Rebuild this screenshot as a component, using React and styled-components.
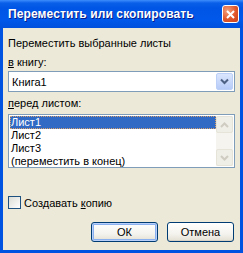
import React from "react";
import styled, { createGlobalStyle } from "styled-components";

const Global = createGlobalStyle`
  html, body { margin: 0; padding: 0; background: #fff; }
  body { font-family: Tahoma, "DejaVu Sans", "Liberation Sans", sans-serif; }
`;

const Window = styled.div`
  width: 243px;
  height: 253px;
  box-sizing: border-box;
  background: #0053e1;
  display: flex;
  flex-direction: column;
  padding: 0 3px 3px 3px;
  overflow: hidden;
`;

const TitleBar = styled.div`
  height: 28px;
  flex: none;
  margin: 0 -3px;
  padding: 0 4px 0 8px;
  display: flex;
  align-items: center;
  justify-content: space-between;
  background: linear-gradient(#3d8dfb 0px, #0a5fe8 3px, #0055e5 8px, #0058ea 20px, #0050dc 28px);
`;

const Title = styled.span`
  color: #fff;
  font-family: "Liberation Sans", sans-serif;
  font-weight: bold;
  font-size: 12px;
  letter-spacing: 0.1px;
  text-shadow: 1px 1px 0 #0a1e8a;
  white-space: nowrap;
`;

const CloseButton = styled.div`
  width: 17px;
  height: 18px;
  box-sizing: border-box;
  border: 1px solid #fff;
  border-radius: 3px;
  background: radial-gradient(circle at 30% 30%, #f2a07e, #e0572c 55%, #c8401a);
  display: flex;
  align-items: center;
  justify-content: center;
`;

const Body = styled.div`
  flex: 1;
  background: #ece9d8;
  padding: 9px 5px 0 5px;
  display: flex;
  flex-direction: column;
  font-family: "Liberation Sans", sans-serif;
  font-size: 11px;
  color: #000;
`;

const Label = styled.div`
  line-height: 13px;
  height: 13px;
  margin-top: ${(p) => p.$mt || 0}px;
  white-space: nowrap;
`;

const U = styled.span`
  text-decoration: underline;
`;

const Combo = styled.div`
  margin-top: 2px;
  height: 21px;
  box-sizing: border-box;
  border: 1px solid #7f9db9;
  background: #fff;
  display: flex;
  align-items: center;
  justify-content: space-between;
  padding: 0 1px 0 3px;
`;

const DropButton = styled.div`
  width: 17px;
  height: 17px;
  box-sizing: border-box;
  border: 1px solid #bcd0f7;
  border-radius: 2px;
  background: linear-gradient(#dbe6fd, #b6cbf8);
  display: flex;
  align-items: center;
  justify-content: center;
`;

const ListBox = styled.div`
  margin-top: 4px;
  height: 54px;
  box-sizing: border-box;
  border: 1px solid #7f9db9;
  background: #fff;
  display: flex;
  padding: 1px;
`;

const Items = styled.div`
  flex: 1;
  display: flex;
  flex-direction: column;
`;

const Item = styled.div`
  height: 13px;
  line-height: 13px;
  padding-left: 1px;
  white-space: nowrap;
  background: ${(p) => (p.$selected ? "#316ac5" : "transparent")};
  color: ${(p) => (p.$selected ? "#fff" : "#000")};
  outline: ${(p) => (p.$selected ? "1px dotted #d8a06a" : "none")};
  outline-offset: -1px;
`;

const ScrollBar = styled.div`
  width: 17px;
  display: flex;
  flex-direction: column;
  justify-content: space-between;
  background: #f5f4ee;
`;

const ScrollBtn = styled.div`
  height: 17px;
  box-sizing: border-box;
  border: 1px solid #e6e4d9;
  border-radius: 2px;
  background: #efeee7;
  display: flex;
  align-items: center;
  justify-content: center;
`;

const CheckRow = styled.div`
  margin-top: 28px;
  display: flex;
  align-items: center;
  gap: 3px;
  height: 13px;
`;

const CheckBox = styled.div`
  width: 13px;
  height: 13px;
  box-sizing: border-box;
  border: 1px solid #1c5180;
  background: linear-gradient(135deg, #dcdcd6, #fff);
`;

const ButtonRow = styled.div`
  margin-top: 13px;
  display: flex;
  justify-content: flex-end;
  gap: 9px;
  padding-right: 1px;
`;

const Button = styled.div`
  width: 67px;
  height: 20px;
  box-sizing: border-box;
  border: 1px solid #003c74;
  border-radius: 3px;
  background: linear-gradient(#fff, #f4f3ee 60%, #e3e0d3);
  box-shadow: ${(p) =>
    p.$default ? "inset 0 0 0 1px #b9d1fa, inset 0 0 0 2px #8bb0ef" : "inset 0 -1px 0 #d6d0c5"};
  display: flex;
  align-items: center;
  justify-content: center;
  font-size: 11px;
`;

export default function App() {
  return (
    <>
      <Global />
      <Window>
        <TitleBar>
          <Title>Переместить или скопировать</Title>
          <CloseButton>
            <svg width="9" height="9" viewBox="0 0 9 9">
              <path d="M1 1L8 8M8 1L1 8" stroke="#fff" strokeWidth="2" />
            </svg>
          </CloseButton>
        </TitleBar>
        <Body>
          <Label>Переместить выбранные листы</Label>
          <Label $mt={6}>
            <U>в</U> книгу:
          </Label>
          <Combo>
            <span>Книга1</span>
            <DropButton>
              <svg width="9" height="7" viewBox="0 0 9 7">
                <path d="M1 1.5L4.5 5L8 1.5" fill="none" stroke="#4d6185" strokeWidth="2" />
              </svg>
            </DropButton>
          </Combo>
          <Label $mt={5}>
            <U>п</U>еред листом:
          </Label>
          <ListBox>
            <Items>
              <Item $selected>Лист1</Item>
              <Item>Лист2</Item>
              <Item>Лист3</Item>
              <Item>(переместить в конец)</Item>
            </Items>
            <ScrollBar>
              <ScrollBtn>
                <svg width="9" height="6" viewBox="0 0 9 6">
                  <path d="M1 5L4.5 1.5L8 5" fill="none" stroke="#cfcdc2" strokeWidth="2" />
                </svg>
              </ScrollBtn>
              <ScrollBtn>
                <svg width="9" height="6" viewBox="0 0 9 6">
                  <path d="M1 1L4.5 4.5L8 1" fill="none" stroke="#cfcdc2" strokeWidth="2" />
                </svg>
              </ScrollBtn>
            </ScrollBar>
          </ListBox>
          <CheckRow>
            <CheckBox />
            <span>
              Создавать <U>к</U>опию
            </span>
          </CheckRow>
          <ButtonRow>
            <Button $default>ОК</Button>
            <Button>Отмена</Button>
          </ButtonRow>
        </Body>
      </Window>
    </>
  );
}
